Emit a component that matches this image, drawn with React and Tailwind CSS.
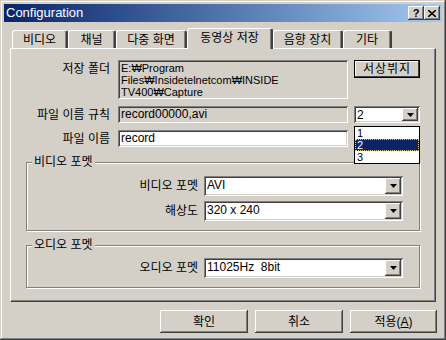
const raised =
  "shadow-[inset_-1px_-1px_0_#404040,inset_1px_1px_0_#ffffff,inset_-2px_-2px_0_#808080,inset_2px_2px_0_#d4d0c8]";
const sunken =
  "shadow-[inset_1px_1px_0_#808080,inset_-1px_-1px_0_#ffffff,inset_2px_2px_0_#404040,inset_-2px_-2px_0_#d4d0c8]";

const tabs = [
  { label: "비디오", w: "w-[56px]" },
  { label: "채널", w: "w-[48px]" },
  { label: "다중 화면", w: "w-[71px]" },
  { label: "동영상 저장", w: "w-[86px]", active: true },
  { label: "음향 장치", w: "w-[70px]" },
  { label: "기타", w: "w-[49px]" },
];

function Arrow() {
  return (
    <div className={`w-[16px] h-full bg-[#d4d0c8] ${raised} flex items-center justify-center`}>
      <svg width="7" height="4" viewBox="0 0 7 4">
        <path d="M0 0h7L3.5 4z" fill="#000" />
      </svg>
    </div>
  );
}

function Combo({ value, className }) {
  return (
    <div className={`${className} bg-white ${sunken} p-[2px] flex`}>
      <div className="flex-1 pl-[1px] leading-[15px] text-[12px] whitespace-pre">{value}</div>
      <Arrow />
    </div>
  );
}

function Group({ title, className, children }) {
  return (
    <div
      className={`relative border border-[#808080] shadow-[1px_1px_0_#ffffff,inset_1px_1px_0_#ffffff] ${className}`}
    >
      <span className="absolute left-[5px] top-[-8px] px-[2px] bg-[#d4d0c8] leading-[14px]">
        {title}
      </span>
      {children}
    </div>
  );
}

function Button({ children, className }) {
  return (
    <button
      className={`h-[23px] bg-[#d4d0c8] ${raised} flex items-center justify-center text-[12px] ${className}`}
    >
      {children}
    </button>
  );
}

export default function App() {
  return (
    <div
      className="w-[446px] h-[340px] bg-[#d4d0c8] p-[4px] text-[12px] text-black shadow-[inset_-1px_-1px_0_#404040,inset_1px_1px_0_#d4d0c8,inset_-2px_-2px_0_#808080,inset_2px_2px_0_#ffffff] overflow-hidden"
      style={{ fontFamily: '"Liberation Sans", "Noto Sans CJK KR", sans-serif' }}
    >
      {/* title bar */}
      <div className="h-[18px] bg-gradient-to-r from-[#0a246a] to-[#a6caf0] flex items-center pl-[2px] pr-[2px]">
        <span className="text-white text-[13px] leading-[18px] flex-1">Configuration</span>
        <div className={`w-[16px] h-[14px] bg-[#d4d0c8] ${raised} flex items-center justify-center text-[11px] font-bold leading-none`}>
          ?
        </div>
        <div className={`w-[16px] h-[14px] bg-[#d4d0c8] ${raised} flex items-center justify-center`}>
          <svg width="8" height="7" viewBox="0 0 8 7">
            <path d="M0 0l8 7M8 0L0 7" stroke="#000" strokeWidth="1.6" />
          </svg>
        </div>
      </div>

      {/* tabs */}
      <div className="flex items-end h-[20px] mt-[6px] ml-[8px] relative z-10">
        {tabs.map((t) =>
          t.active ? (
            <div
              key={t.label}
              className={`${t.w} h-[21px] -mb-[1px] bg-[#d4d0c8] rounded-t-[3px] border-t border-l border-white border-r-2 border-r-[#404040] shadow-[inset_-1px_0_0_#808080] flex justify-center pt-[1px] leading-[16px]`}
            >
              {t.label}
            </div>
          ) : (
            <div
              key={t.label}
              className={`${t.w} h-[18px] rounded-t-[3px] border-t border-l border-white border-r-2 border-r-[#404040] shadow-[inset_-1px_0_0_#808080] flex justify-center pt-[1px] leading-[16px]`}
            >
              {t.label}
            </div>
          )
        )}
      </div>

      {/* panel */}
      <div className="relative ml-[6px] w-[426px] h-[254px] border-t border-l border-white border-r border-b border-r-[#404040] border-b-[#404040] shadow-[inset_-1px_-1px_0_#808080] pt-[11px]">
        <div className="flex items-start">
          <div className="w-[99px] text-right mt-[2px] leading-[14px]">저장 폴더</div>
          <div className={`ml-[8px] w-[230px] h-[39px] ${sunken} px-[3px] py-[2px] leading-[12px] text-[11px]`}>
            E:₩Program
            <br />
            Files₩Insidetelnetcom₩INSIDE
            <br />
            TV400₩Capture
          </div>
          <button className="ml-[6px] w-[66px] h-[18px] border border-black bg-[#d4d0c8] shadow-[inset_-1px_-1px_0_#404040,inset_1px_1px_0_#ffffff] text-[12px] leading-[14px] tracking-[1px]">
            서상뷔지
          </button>
        </div>

        <div className="flex items-center mt-[7px]">
          <div className="w-[99px] text-right leading-[14px]">파일 이름 규칙</div>
          <div className={`ml-[8px] w-[230px] h-[17px] ${sunken} px-[3px] leading-[17px]`}>
            record00000,avi
          </div>
          <Combo value="2" className="ml-[6px] w-[66px] h-[17px]" />
        </div>

        <div className="flex items-center mt-[7px]">
          <div className="w-[99px] text-right leading-[14px]">파일 이름</div>
          <div className={`ml-[8px] w-[230px] h-[17px] bg-white ${sunken} px-[3px] leading-[17px]`}>
            record
          </div>
        </div>

        <Group title="비디오 포멧" className="ml-[15px] mt-[15px] w-[394px] h-[69px] pt-[13px]">
          <div className="flex items-center justify-end pr-[16px]">
            <span className="mr-[6px]">비디오 포멧</span>
            <Combo value="AVI" className="w-[199px] h-[20px]" />
          </div>
          <div className="flex items-center justify-end pr-[16px] mt-[5px]">
            <span className="mr-[6px]">해상도</span>
            <Combo value="320 x 240" className="w-[199px] h-[20px]" />
          </div>
        </Group>

        <Group title="오디오 포멧" className="ml-[15px] mt-[14px] w-[394px] h-[43px] pt-[12px]">
          <div className="flex items-center justify-end pr-[16px]">
            <span className="mr-[6px]">오디오 포멧</span>
            <Combo value="11025Hz  8bit" className="w-[199px] h-[20px]" />
          </div>
        </Group>

        {/* open dropdown list */}
        <div className="absolute left-[343px] top-[77px] w-[66px] h-[38px] bg-white border border-black z-20 text-[11px]">
          <div className="h-[12px] leading-[12px] pl-[2px]">1</div>
          <div className="h-[12px] leading-[12px] pl-[2px] bg-[#0a246a] text-white outline outline-1 outline-dotted outline-[#e0d080] -outline-offset-1">
            2
          </div>
          <div className="h-[12px] leading-[12px] pl-[2px]">3</div>
        </div>
      </div>

      {/* buttons */}
      <div className="flex mt-[8px] ml-[156px] gap-[7px]">
        <Button className="w-[88px]">확인</Button>
        <Button className="w-[88px]">취소</Button>
        <Button className="w-[87px]">
          <span>
            적용(<span className="underline">A</span>)
          </span>
        </Button>
      </div>
    </div>
  );
}
